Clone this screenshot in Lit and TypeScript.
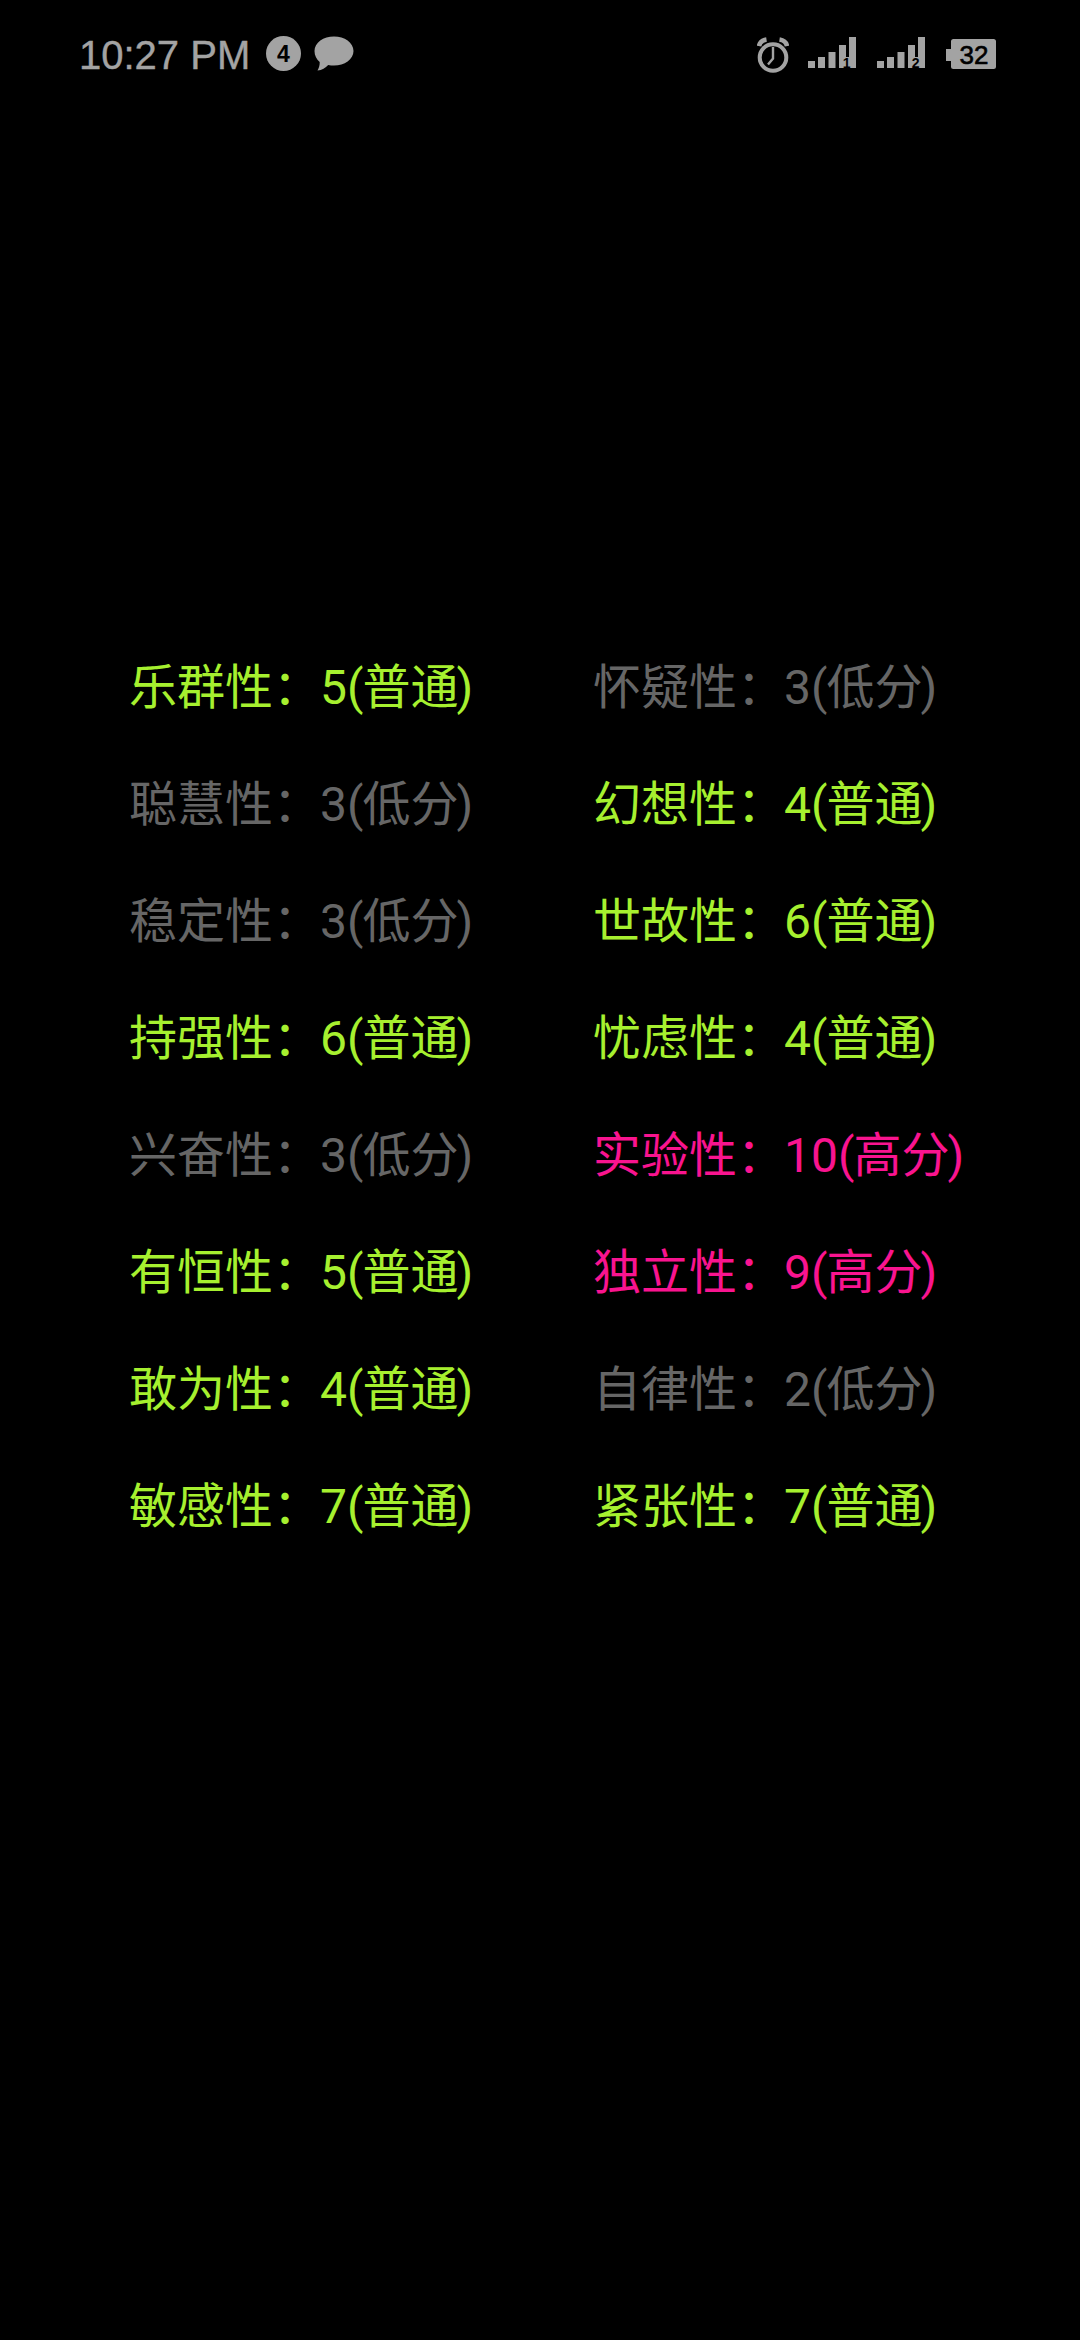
import { LitElement, html, css } from "lit";
import { customElement } from "lit/decorators.js";

type Level = "mid" | "low" | "high";
const LABEL: Record<Level, string> = { mid: "普通", low: "低分", high: "高分" };
const rows: [string, number, Level, string, number, Level][] = [
  ["乐群性", 5, "mid", "怀疑性", 3, "low"],
  ["聪慧性", 3, "low", "幻想性", 4, "mid"],
  ["稳定性", 3, "low", "世故性", 6, "mid"],
  ["持强性", 6, "mid", "忧虑性", 4, "mid"],
  ["兴奋性", 3, "low", "实验性", 10, "high"],
  ["有恒性", 5, "mid", "独立性", 9, "high"],
  ["敢为性", 4, "mid", "自律性", 2, "low"],
  ["敏感性", 7, "mid", "紧张性", 7, "mid"],
];

const signal = (n: string) => html`
  <svg class="sig" viewBox="0 0 48 36" width="48" height="36">
    <rect x="0" y="24" width="7" height="7" fill="#a3a3a3"/>
    <rect x="10" y="20" width="7" height="11" fill="#a3a3a3"/>
    <rect x="20.500" y="15" width="7" height="16" fill="#a3a3a3"/>
    <rect x="31" y="8" width="17" height="23" fill="#a3a3a3"/>
    <rect x="38" y="0" width="10" height="8" fill="#a3a3a3"/>
    <rect x="38" y="0" width="3" height="20" fill="#000"/>
    <text x="38.700" y="30.500" text-anchor="middle" class="signum">${n}</text>
  </svg>`;

@customElement("app-root")
export class AppRoot extends LitElement {
  static styles = css`
    :host { display: block; width: 1080px; height: 2340px; background: #000; overflow: hidden; }
    .status {
      display: flex; align-items: center; height: 38px; padding: 36px 84px 0 79px;
      color: #a3a3a3; font-family: "Liberation Sans", Arial, sans-serif;
    }
    .time { font-size: 40px; line-height: 38px; -webkit-text-stroke: 0.4px #a3a3a3; }
    .badge { margin-left: 16px; }
    .bubble { margin-left: 13px; }
    .spacer { flex: 1; }
    .alarm { margin-right: 19px; }
    .sig { margin-right: 21px; }
    .sig + .sig { margin-right: 20px; }
    svg { display: block; flex: none; }
    svg text { font-family: "Liberation Sans", Arial, sans-serif; font-weight: 700; }
    .signum { font-size: 14px; fill: #000; }
    .batt-num { font-weight: 400; stroke: #000; stroke-width: 0.6; }
    .grid {
      display: grid; grid-template-columns: 464px 464px; grid-auto-rows: 117px;
      padding: 555px 0 0 129px;
      font-family: Roboto, "Noto Sans CJK SC", sans-serif; font-size: 48px;
    }
    .cell { display: flex; align-items: center; white-space: nowrap; line-height: 117px; }
    .val { margin-left: -1px; }
    .open { margin-right: -1px; }
    .close { margin-left: -2px; }
    .mid { color: #a6f02f; }
    .low { color: #666666; }
    .high { color: #f9148f; }
  `;

  cell(name: string, v: number, l: Level) {
    return html`<div class="cell ${l}">${name}：<span class="val">${v}</span><span class="open">(</span>${LABEL[l]}<span class="close">)</span></div>`;
  }

  render() {
    return html`
      <div class="status">
        <span class="time">10:27 PM</span>
        <svg class="badge" viewBox="0 0 35 38" width="35" height="38">
          <circle cx="17.500" cy="17.500" r="17.500" fill="#a3a3a3"/>
          <text x="17.500" y="25.500" text-anchor="middle" font-size="23" fill="#000">4</text>
        </svg>
        <svg class="bubble" viewBox="0 0 40 38" width="40" height="38">
          <path fill="#a3a3a3" d="M20 .5C30.500 .5 39.500 6.500 39.500 15S30.500 29.500 20 29.500c-2 0-4-.2-5.800-.6C11.500 32 8 34 3.500 34.500c1.500-2.500 2.300-5.200 2.200-8.500C2.400 23.200 .5 19.300 .5 15 .5 6.500 9.500 .5 20 .5Z"/>
        </svg>
        <div class="spacer"></div>
        <svg class="alarm" viewBox="0 0 32 36" width="32" height="36" fill="none" stroke="#a3a3a3">
          <circle cx="16" cy="20.500" r="13.300" stroke-width="4"/>
          <path d="M16 10v11.500l-5 6" stroke-width="2.400"/>
          <path d="M2 9Q3 3.500 9.500 2.500M30 9Q29 3.500 22.500 2.500" stroke-width="4.600"/>
        </svg>
        ${signal("1")}${signal("2")}
        <svg viewBox="0 0 51 32" width="51" height="32">
          <path fill="#a3a3a3" d="M6 2.500Q6 0 8.500 0H48.500Q51 0 51 2.500V27.500Q51 30 48.500 30H8.500Q6 30 6 27.500V22H1V10H6Z"/>
          <text x="29" y="24.500" text-anchor="middle" font-size="26" fill="#000" class="batt-num">32</text>
        </svg>
      </div>
      <div class="grid">
        ${rows.map((r) => html`${this.cell(r[0], r[1], r[2])}${this.cell(r[3], r[4], r[5])}`)}
      </div>
    `;
  }
}
